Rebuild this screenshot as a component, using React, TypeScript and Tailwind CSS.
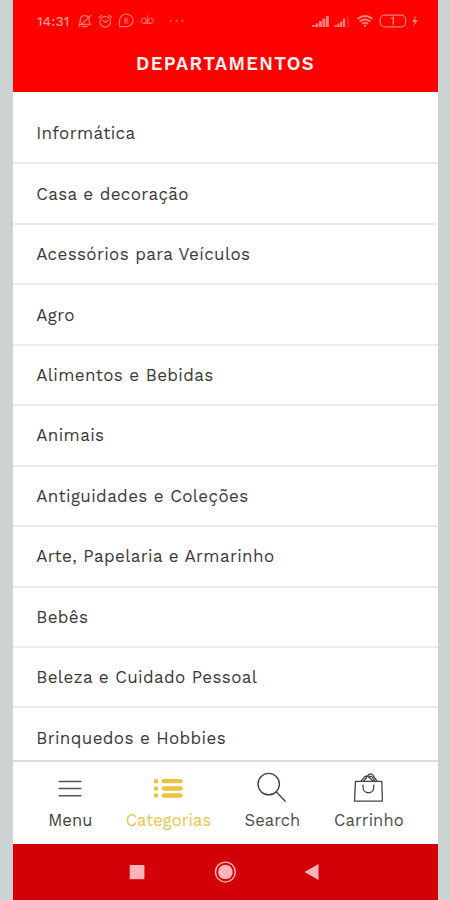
import React from "react";

const departments = [
  "Informática",
  "Casa e decoração",
  "Acessórios para Veículos",
  "Agro",
  "Alimentos e Bebidas",
  "Animais",
  "Antiguidades e Coleções",
  "Arte, Papelaria e Armarinho",
  "Bebês",
  "Beleza e Cuidado Pessoal",
  "Brinquedos e Hobbies",
];

function NotificationIcons() {
  return (
    <svg width="110" height="20" viewBox="76 11 110 20" fill="none" stroke="#ff7068" strokeWidth="1.3" strokeLinecap="round" strokeLinejoin="round">
      {/* muted bell */}
      <path d="M79 24.500h11.500l-1.300-2.500v-2.500a4.500 4.500 0 0 0-8.900 0v2.500zM82.500 26.700h4.500M90.800 15.500L78.800 26.500" />
      {/* alarm clock */}
      <circle cx="105.300" cy="21.700" r="5.300" />
      <path d="M99 17.300l2.500-2M111.600 17.300l-2.500-2M103 20.500l2.300 1.800 2.300-1.800" />
      {/* chat bubble */}
      <path d="M119.500 26.700v-5.700a6.800 6.300 0 1 1 6.800 5.700z" />
      <path d="M124.900 18.300v5h1.800a1.300 1.300 0 0 0 0-2.600h-1.800 1.600a1.200 1.200 0 0 0 0-2.400z" strokeWidth="1" />
      {/* voicemail */}
      <path d="M147.300 15.500v8M143.700 23.300h7.200" strokeWidth="1" />
      <circle cx="143.700" cy="20.700" r="2.600" strokeWidth="1" />
      <circle cx="150.900" cy="20.700" r="2.600" strokeWidth="1" />
      <g fill="#ff7068" stroke="none">
        <circle cx="170.800" cy="20.700" r="1" />
        <circle cx="176.800" cy="20.700" r="1" />
        <circle cx="182.500" cy="20.700" r="1" />
      </g>
    </svg>
  );
}

function SystemIcons() {
  return (
    <svg width="110" height="20" viewBox="310 11 110 20" fill="none" stroke="#ff8078">
      <g fill="#ff8078" stroke="none">
        <path d="M312 25h2.900v2H312zM315.500 23.500h2.900V27h-2.900zM319 21h2.900v6H319zM322.500 18.500h2.900V27h-2.900zM326 16h2.900v11H326z" />
        <path d="M334.500 25h2.300v2h-2.300zM337.300 23.500h2.300V27h-2.300zM340.100 21.500h2.300V27h-2.300zM342.900 18.500h2.300V27h-2.300z" />
        <path d="M347.300 16.500h1.300V27h-1.300z" opacity=".45" />
        <path d="M416.500 15l-4.700 7h2.900l-1.700 5 5-7h-2.900z" />
      </g>
      <path d="M357.500 19q7.500-6 15 0M359.800 21.500q5.200-4 10.400 0M362.100 23.800q2.900-2.300 5.800 0" strokeWidth="1.900" />
      <circle cx="365" cy="25.700" r="1.200" fill="#ff8078" stroke="none" />
      <rect x="380.200" y="15.200" width="25.500" height="11.600" rx="4.500" strokeWidth="1.200" />
      <path d="M391 18.300l2.300-1v8" strokeWidth="1.400" />
    </svg>
  );
}

function MenuIcon() {
  return (
    <svg width="32" height="32" viewBox="0 0 32 32" stroke="#555" strokeWidth="1.600" strokeLinecap="round">
      <path d="M5.200 9.500h21.600M5.200 16.500h21.600M5.200 23.700h21.600" />
    </svg>
  );
}

function CategoriesIcon() {
  return (
    <svg width="32" height="32" viewBox="0 0 32 32" stroke="#e8c344" strokeLinecap="round">
      <path d="M11.700 9.200h17M11.700 16.500h17M11.700 23.500h17" strokeWidth="4.300" />
      <path d="M4 9.200h.1M4 16.500h.1M4 23.500h.1" strokeWidth="4.600" />
    </svg>
  );
}

function SearchIcon() {
  return (
    <svg width="32" height="32" viewBox="0 0 32 32" fill="none" stroke="#444" strokeWidth="1.400" strokeLinecap="round">
      <circle cx="12.700" cy="12.100" r="10.700" />
      <path d="M20.200 19.800l9 9.500" />
    </svg>
  );
}

function BagIcon() {
  return (
    <svg width="32" height="32" viewBox="0 0 32 32" fill="none" stroke="#444" strokeWidth="1.300" strokeLinecap="round" strokeLinejoin="round">
      <path d="M3.500 9.300h26.300l.6 19.900H2.500z" />
      <path d="M11 13.200v1.700c0 7.800 10.800 7.800 10.800 0v-1.700" />
      <path d="M8.800 9.300l4.200-5 2.500-.3 5.700 5.300M11.800 9l2.700-3.500M15.500 4c2.500-3.300 5.300-2.300 6.300.6l3.200 4.500M16.800 5.300c1.700-1.500 3-1.300 3.800.2l2 3.500" />
    </svg>
  );
}

const tabs = [
  { label: "Menu", Icon: MenuIcon, style: "w-[98px] text-[#3d3d3d]" },
  { label: "Categorias", Icon: CategoriesIcon, style: "w-[98px] text-[#e6c551]" },
  { label: "Search", Icon: SearchIcon, style: "w-[110px] text-[#4d4d4d]" },
  { label: "Carrinho", Icon: BagIcon, style: "w-[83px] text-[#4d4d4d]" },
];

export default function App() {
  return (
    <div className="flex h-[900px] w-[450px] justify-start overflow-hidden bg-[#cbd4d2] pl-[12.700px] font-['Work_Sans','Open_Sans',sans-serif]">
      <div className="flex h-full w-[425.600px] flex-col bg-white">
        <header className="h-[92px] shrink-0 bg-[#ff0000]">
          <div className="flex h-[42px] items-center justify-between pr-[18px] pl-[24.300px]">
            <div className="flex items-center">
              <span className="w-[39px] text-[14px] leading-5 font-medium text-[#ff948c]">14:31</span>
              <NotificationIcons />
            </div>
            <SystemIcons />
          </div>
          <h1 className="text-center text-[18.500px] leading-[43px] font-semibold tracking-[1.300px] text-[#fff0ee]">DEPARTAMENTOS</h1>
        </header>

        <ul className="h-[668px] shrink-0 overflow-hidden pt-[12px]">
          {departments.map((name) => (
            <li key={name} className="flex h-[60.450px] items-center border-b-2 border-[#eaecec] pt-[1.500px] pl-[23.500px] text-[17px] tracking-[0.37px] text-[#3a3a3a]">
              <span className="whitespace-nowrap">{name}</span>
            </li>
          ))}
        </ul>

        <nav className="flex h-[84px] shrink-0 border-t-2 border-[#d9dddd] pl-2">
          {tabs.map(({ label, Icon, style }) => (
            <div key={label} className={`flex flex-col items-center pt-2.5 text-[16.500px] leading-[33px] tracking-[0.1px] whitespace-nowrap ${style}`}>
              <Icon />
              <span className="pl-[1.500px]">{label}</span>
            </div>
          ))}
        </nav>

        <footer className="flex h-[56px] shrink-0 items-center bg-[#d20007] pl-[116px]">
          <svg width="194" height="26" viewBox="0 0 194 26" fill="#ffb3bb">
            <path d="M.7 6h14.700v14.200H.7z" />
            <circle cx="96.400" cy="13" r="7.300" />
            <circle cx="96.400" cy="13" r="9.900" fill="none" stroke="#ffb3bb" strokeWidth="1.400" />
            <path d="M189.500 5v16l-14-8z" />
          </svg>
        </footer>
      </div>
    </div>
  );
}
